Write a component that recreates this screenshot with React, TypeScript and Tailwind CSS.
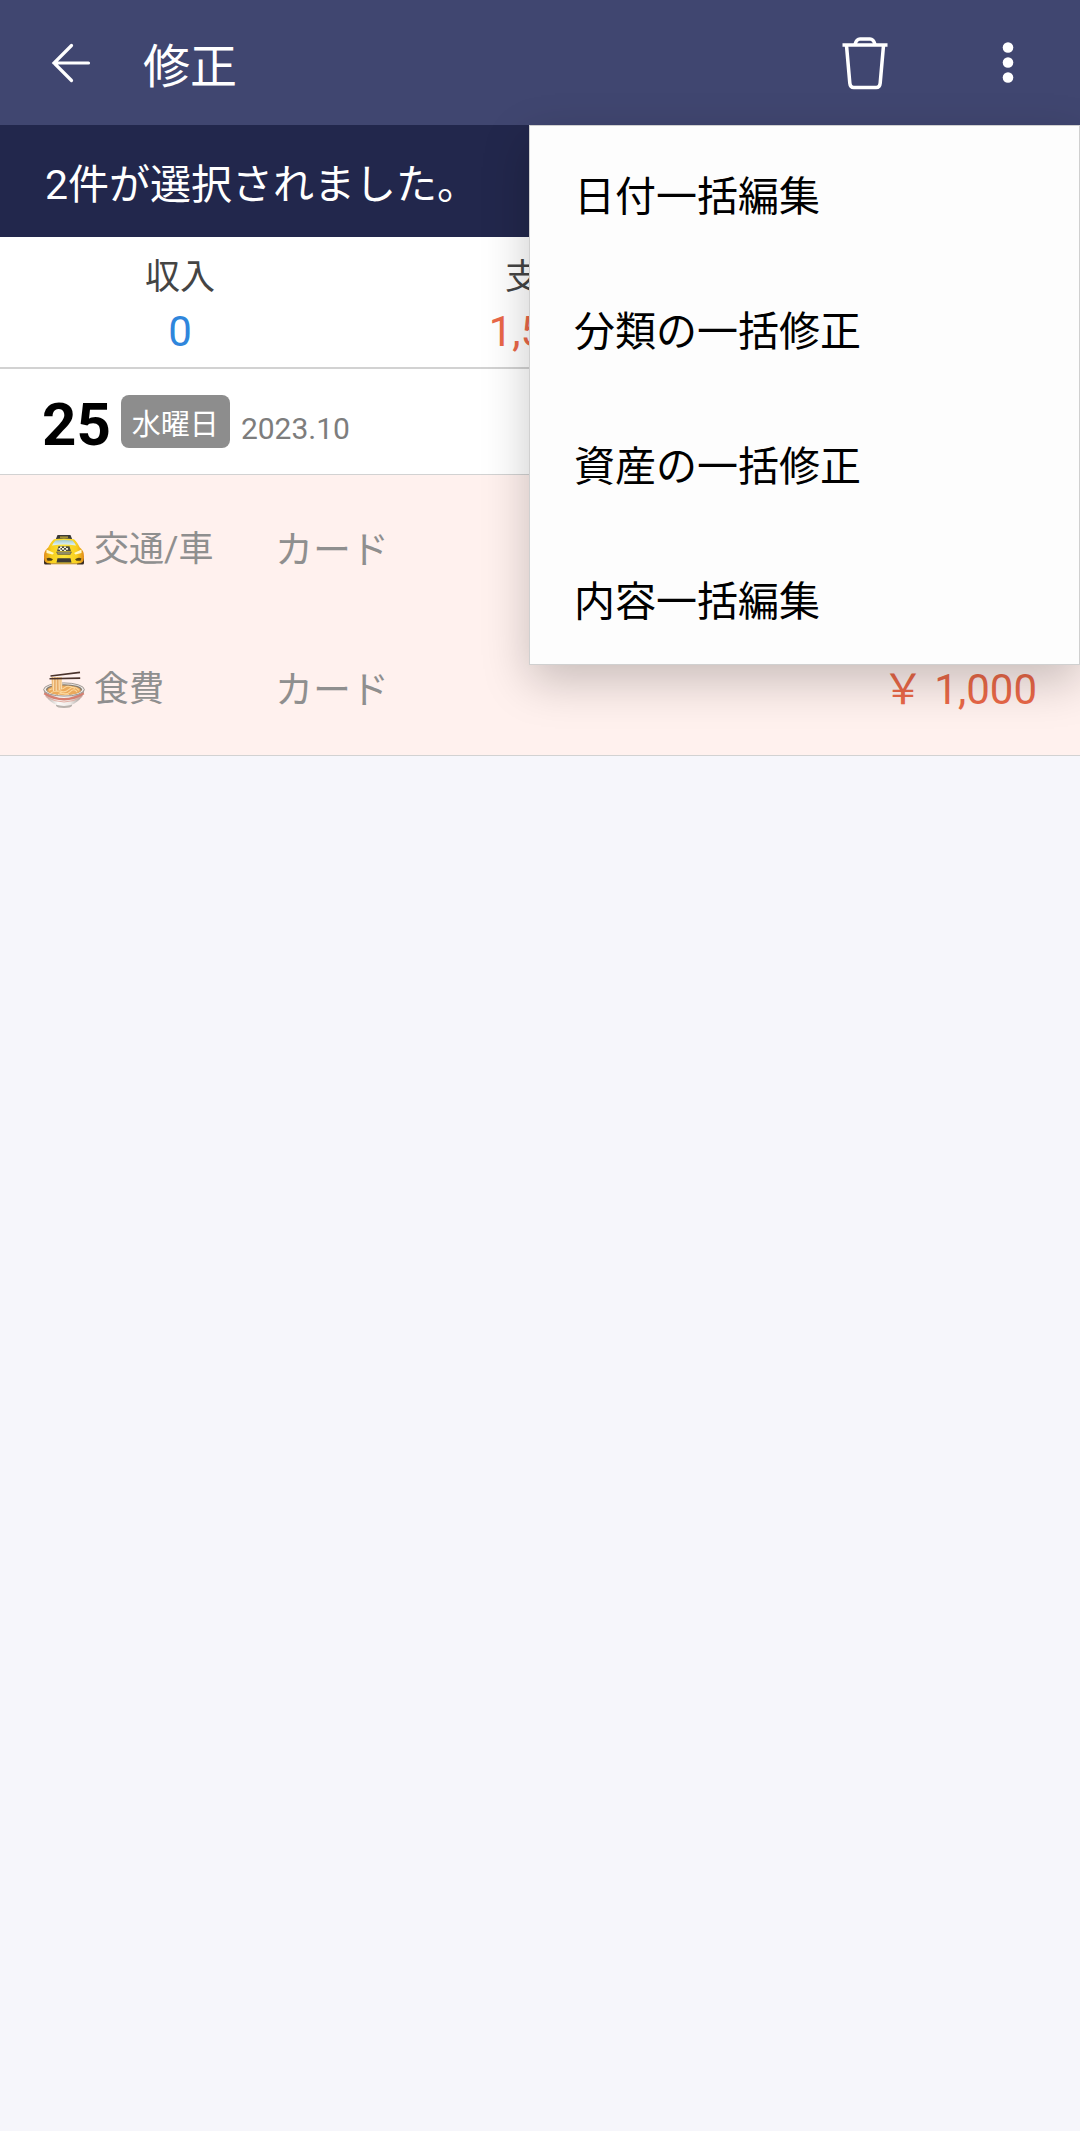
import { useState } from "react";

type Entry = {
  id: number;
  category: string;
  icon: "taxi" | "noodles";
  account: string;
  amount: string;
};

const totals = [
  { label: "収入", value: "0", color: "text-[#2f86dc]" },
  { label: "支出", value: "1,500", color: "text-[#ea6848]" },
  { label: "合計", value: "-1,500", color: "text-[#444444]" },
];

const entries: Entry[] = [
  { id: 1, category: "交通/車", icon: "taxi", account: "カード", amount: "500" },
  { id: 2, category: "食費", icon: "noodles", account: "カード", amount: "1,000" },
];

const menuItems = ["日付一括編集", "分類の一括修正", "資産の一括修正", "内容一括編集"];

function BackIcon() {
  return (
    <svg viewBox="0 0 40 40" className="h-10 w-10" fill="none" stroke="currentColor" strokeWidth="3.200" strokeLinecap="round">
      <path d="M20.500 2.500 3 20l17.500 17.500M3 20h34.500" />
    </svg>
  );
}

function TrashIcon() {
  return (
    <svg viewBox="0 0 46 54" className="h-[54px] w-[46px]" fill="none" stroke="currentColor" strokeWidth="3.500">
      <path d="M0.500 9h45" />
      <path d="M13 8.500c.8-3 2.400-5.500 5-5.500h10c2.600 0 4.200 2.500 5 5.500" />
      <path d="M4.500 9.500 7.800 47c.3 3.200 1.400 4.500 4 4.500h22.400c2.600 0 3.700-1.300 4-4.500L41.500 9.500" />
    </svg>
  );
}

function MoreIcon() {
  return (
    <svg viewBox="0 0 12 42" className="h-[42px] w-3" fill="currentColor">
      <circle cx="6" cy="5.500" r="5.300" />
      <circle cx="6" cy="20.500" r="5.300" />
      <circle cx="6" cy="35.500" r="5.300" />
    </svg>
  );
}

function TaxiIcon() {
  return (
    <svg viewBox="0 0 42 38" className="h-[38px] w-[42px]" aria-hidden="true">
      <defs>
        <linearGradient id="taxi-body" x1="0" x2="1">
          <stop offset="0" stopColor="#e08a1c" />
          <stop offset=".18" stopColor="#f8cf1d" />
          <stop offset=".5" stopColor="#fbe33a" />
          <stop offset=".82" stopColor="#f8cf1d" />
          <stop offset="1" stopColor="#e08a1c" />
        </linearGradient>
        <linearGradient id="taxi-glass" x1="0" x2="0" y1="0" y2="1">
          <stop offset="0" stopColor="#9fc9d0" />
          <stop offset="1" stopColor="#e4f5f7" />
        </linearGradient>
      </defs>
      <path d="M1 27h7v6.500H2.500Q1 33.500 1 32zM34 27h7v5q0 1.500-1.500 1.500H34z" fill="#3a2d22" />
      <path d="M14.500 4h13l1.800 4.500H12.700z" fill="#3b3a36" />
      <path d="M17 5.400h8v1.500h-8z" fill="#b19a3a" />
      <path d="M11 8.200q10-1.400 20 0c2.500 2.400 4.300 5 5.800 8.200 3.300 2.600 4.200 5 4.200 9.100 0 4-.8 5.800-3.600 6.700H4.600C1.800 31.300 1 29.500 1 25.500c0-4.100.9-6.500 4.200-9.100C6.700 13.200 8.500 10.600 11 8.200z" fill="url(#taxi-body)" />
      <path d="M12.500 9.400q8.500-1 17 0 2 2 3.500 5.100Q21 12.500 9 14.500q1.500-3.100 3.500-5.100z" fill="url(#taxi-glass)" />
      <path d="M15.500 15.200h11l1.500 5H14z" fill="#4a4a42" />
      <path d="M17 15.500h2v1.600h-2zM21 15.500h2v1.600h-2zM19 17.100h2v1.600h-2zM23 17.100h2v1.600h-2zM15.500 17.100h2v1.600h-2zM17 18.700h2v1.300h-2zM21 18.700h2v1.300h-2z" fill="#f4f1d8" />
      <path d="M3.500 18.500 11 22l-1.500 1.500-6-1.500zM38.500 18.500 31 22l1.500 1.500 6-1.500z" fill="#fff7c4" />
      <path d="M13 20.800h16l-1.600 3H14.600z" fill="#6b6440" />
      <path d="M14.500 22h13" stroke="#d7d3b0" strokeWidth=".7" />
      <path d="M3.500 27.500q3-2 6.500.8l-1.500 1.500h-4zM38.500 27.500q-3-2-6.500.8l1.500 1.500h4z" fill="#534315" />
      <path d="M14.500 27.200h13l1 4.300h-15z" fill="#3c3a35" />
      <path d="M6 32.200h30l-2 1H8z" fill="#b8860f" />
    </svg>
  );
}

function NoodlesIcon() {
  return (
    <svg viewBox="0 0 42 38" className="h-[38px] w-[42px]" aria-hidden="true">
      <defs>
        <linearGradient id="bowl-side" x1="0" x2="1">
          <stop offset="0" stopColor="#a39d98" />
          <stop offset=".35" stopColor="#fbf9f7" />
          <stop offset=".65" stopColor="#efeae7" />
          <stop offset="1" stopColor="#8f8984" />
        </linearGradient>
      </defs>
      <path d="M13 33h16v1.800q-1 2.200-8 2.200t-8-2.200z" fill="#b9b2ad" />
      <path d="M.6 18.500C1 24 5 30 13 33.800q8 2.200 16 0C37 30 41 24 41.400 18.500z" fill="url(#bowl-side)" />
      <path d="M1.300 22.300q19.700 12 39.400 0" fill="none" stroke="#d67f70" strokeWidth="2.400" />
      <path d="M2.600 25.500q18.400 11 36.800 0" fill="none" stroke="#e2a79b" strokeWidth=".9" />
      <ellipse cx="21" cy="18.500" rx="20.300" ry="6.600" fill="#eeeae6" stroke="#97908a" strokeWidth=".9" />
      <ellipse cx="21" cy="18.500" rx="18" ry="5.300" fill="#837b70" />
      <ellipse cx="21" cy="19.300" rx="16.600" ry="4.900" fill="#eba95b" />
      <path d="M6 19.300q5-3.500 10 0t10-1 10 1M8 21.800q5-3 10 0t9-1 7 0M14 16.800q5 2 8-.5t10 1.200M15 23.500q5-2 11 0" fill="none" stroke="#fbd69a" strokeWidth="1.100" />
      <path d="M8.500 6h10.300l.7 12.500q-5 3-10.500.5z" fill="#f0bd7c" />
      <path d="M10.500 6v14M13.200 6v14M16 6l.4 13M18 6l.5 12" fill="none" stroke="#fbe0b4" strokeWidth=".9" />
      <path d="M12 7l-.2 13M14.700 7v12" fill="none" stroke="#d9924a" strokeWidth=".5" />
      <path d="M7.500 5 37 1.400M6.500 7.700l30.700-.6" fill="none" stroke="#4a332c" strokeWidth="1.600" />
    </svg>
  );
}

export default function App() {
  const [menuOpen, setMenuOpen] = useState(true);

  return (
    <div className="min-h-screen overflow-hidden bg-[#f6f6fb] font-['Roboto','Noto_Sans_CJK_JP',sans-serif]" lang="ja">
      <header className="relative z-10 flex h-[125px] items-center bg-[#404670] pl-[51px] pr-[66px] text-white">
        <button type="button" aria-label="戻る">
          <BackIcon />
        </button>
        <h1 className="ml-[52px] pt-2 text-[47px] leading-[60px]">修正</h1>
        <button type="button" aria-label="削除" className="ml-auto">
          <TrashIcon />
        </button>
        <button
          type="button"
          aria-label="その他"
          aria-expanded={menuOpen}
          className="ml-[114px]"
          onClick={() => setMenuOpen(!menuOpen)}
        >
          <MoreIcon />
        </button>

        {menuOpen && (
          <div
            role="menu"
            className="absolute right-0 top-full w-[551px] bg-[#fdfdfd] text-black shadow-[0_16px_44px_rgba(0,0,0,0.22)] ring-1 ring-inset ring-[#d0d0d0]"
          >
            {menuItems.map((item) => (
              <button
                key={item}
                type="button"
                role="menuitem"
                className="flex h-[135px] w-full items-center px-[45px] pt-2 text-[41px] leading-[56px]"
              >
                {item}
              </button>
            ))}
          </div>
        )}
      </header>

      <p className="flex h-28 items-center bg-[#22274c] px-[45px] pt-2 text-[41px] leading-[56px] text-white">
        2件が選択されました。
      </p>

      {/* Totals */}
      <dl className="grid h-[132px] grid-cols-3 border-b-2 border-[#d2d2d2] bg-white pt-[13px] text-center">
        {totals.map((t) => (
          <div key={t.label}>
            <dt className="text-[35px] leading-[56px] text-[#444444]">{t.label}</dt>
            <dd className={`text-[42px] leading-[52px] ${t.color}`}>{t.value}</dd>
          </div>
        ))}
      </dl>

      <section>
        <div className="flex h-[106px] items-center border-b border-[#d2d2d2] bg-white px-[42px]">
          <h2 className="pt-[6px] text-[60px] font-bold leading-[60px] text-black">25</h2>
          <span className="ml-[10px] rounded-lg bg-[#8d8d8d] px-[11px] pb-[2px] pt-[10px] text-[29px] leading-[41px] text-white">
            水曜日
          </span>
          <time dateTime="2023-10-25" className="ml-[11px] pt-[14px] text-[30px] leading-[40px] text-[#7d7d7d]">
            2023.10
          </time>
        </div>

        <ul className="border-b border-[#d2d2d2] bg-[#fff1ee]">
          {entries.map((e) => (
            <li key={e.id} className="flex h-[140px] items-center px-[43px] pt-[10px] text-[#8f8f8f]">
              <span className="flex w-[232px] items-center gap-[9px] text-[35px] leading-[52px]">
                {e.icon === "taxi" ? <TaxiIcon /> : <NoodlesIcon />}
                {e.category}
              </span>
              <span className="text-[38px] leading-[52px]">{e.account}</span>
              <span className="ml-auto text-[42px] leading-[52px] text-[#ea6848]">￥ {e.amount}</span>
            </li>
          ))}
        </ul>
      </section>
    </div>
  );
}
